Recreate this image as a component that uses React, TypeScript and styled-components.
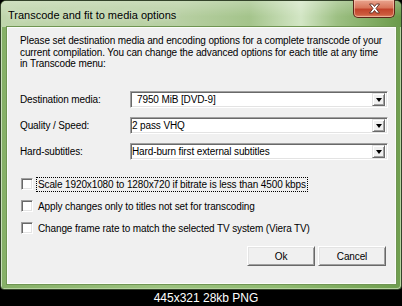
import React from "react";
import styled, { createGlobalStyle } from "styled-components";

const GlobalStyle = createGlobalStyle`
  html, body { margin: 0; padding: 0; background: #000; }
  body { font-family: "Liberation Sans", Arial, sans-serif; }
  * { box-sizing: border-box; }
`;

const Page = styled.div`
  width: 402px;
  height: 306px;
  display: flex;
  flex-direction: column;
  background: #000;
  overflow: hidden;
`;

const Window = styled.div`
  height: 290px;
  display: flex;
  flex-direction: column;
  border: 1px solid #33432a;
  border-radius: 6px 6px 4px 4px;
  background: linear-gradient(to right, #86b067 0%, #9cc27f 40%, #8fba70 70%, #6f9e4e 100%);
  box-shadow: inset 1px 1px 0 #c9dfb9, inset -1px -1px 0 #b6d39f;
`;

const TitleBar = styled.div`
  height: 26px;
  display: flex;
  align-items: flex-start;
  border-radius: 5px 5px 0 0;
  background:
    linear-gradient(to bottom, rgba(255,255,255,0.25), rgba(255,255,255,0) 60%),
    linear-gradient(to right, #c0d6ac 0%, #b7cfa2 45%, #a4c48b 62%, #d3e6c5 75%, #9dc083 84%, #6a9a49 100%);
`;

const Title = styled.span`
  margin: 8px 0 0 7px;
  font-size: 11px;
  line-height: 13px;
  color: #000;
  text-shadow: 0 0 6px rgba(255,255,255,0.8);
`;

const CloseButton = styled.div`
  margin: -1px 6px 0 auto;
  width: 42px;
  height: 18px;
  display: flex;
  align-items: center;
  justify-content: center;
  border: 1px solid #5c2418;
  border-top: none;
  border-radius: 0 0 5px 5px;
  background: linear-gradient(to bottom, #e9a48f 0%, #d9775c 45%, #c2432b 55%, #cc5a3d 85%, #e0896b 100%);
  box-shadow: inset 0 0 0 1px rgba(255,220,200,0.5);
`;

const Panel = styled.div`
  flex: 1;
  margin: 0 5px 5px 6px;
  background: #f0f0f0;
  border: 1px solid #fbfdf9;
  box-shadow: 0 0 0 1px #6f9552;
  padding: 7px 7px 0 12px;
  display: flex;
  flex-direction: column;
  color: #000;
  font-size: 10px;
  letter-spacing: -0.12px;
`;

const Intro = styled.p`
  margin: 0;
  line-height: 11.7px;
  font-size: 10px;
  white-space: nowrap;
`;

const Form = styled.div`
  margin-top: 21px;
  display: grid;
  grid-template-columns: 110px 258px;
  row-gap: 9px;
  align-items: center;
`;

const Label = styled.span`
  font-size: 10px;
`;

const Combo = styled.div<{ $indent?: number }>`
  height: 17px;
  display: flex;
  align-items: center;
  background: #fff;
  border-top: 1px solid #a0a0a0;
  border-left: 1px solid #a0a0a0;
  border-right: 1px solid #fff;
  border-bottom: 1px solid #fff;
  box-shadow: inset 1px 1px 0 #696969, inset -1px -1px 0 #e3e3e3;
  padding-left: ${(p) => p.$indent ?? 2}px;
  padding-right: 2px;
`;

const ComboText = styled.span`
  flex: 1;
  font-size: 10px;
`;

const DropButton = styled.div`
  width: 13px;
  height: 13px;
  background: #f0f0f0;
  border-top: 1px solid #e3e3e3;
  border-left: 1px solid #e3e3e3;
  border-right: 1px solid #696969;
  border-bottom: 1px solid #696969;
  box-shadow: inset 1px 1px 0 #fff, inset -1px -1px 0 #a0a0a0;
  display: flex;
  align-items: center;
  justify-content: center;
`;

const Arrow = styled.span`
  width: 0;
  height: 0;
  border-left: 3.5px solid transparent;
  border-right: 3.5px solid transparent;
  border-top: 4px solid #000;
  margin-top: 1px;
`;

const Checks = styled.div`
  margin-top: 16px;
  display: flex;
  flex-direction: column;
  gap: 6px;
`;

const CheckRow = styled.div`
  height: 16px;
  display: flex;
  align-items: center;
  padding-left: 1px;
`;

const Box = styled.span`
  width: 12px;
  height: 12px;
  background: #fff;
  border-top: 1px solid #a0a0a0;
  border-left: 1px solid #a0a0a0;
  border-right: 1px solid #fff;
  border-bottom: 1px solid #fff;
  box-shadow: inset 1px 1px 0 #696969, inset -1px -1px 0 #e3e3e3;
  margin-right: 3px;
`;

const CheckLabel = styled.span<{ $focus?: boolean }>`
  font-size: 10px;
  line-height: 13px;
  padding: 0 1px;
  border: 1px dotted ${(p) => (p.$focus ? "#000" : "transparent")};
`;

const Buttons = styled.div`
  margin-top: 10px;
  display: flex;
  justify-content: flex-end;
  gap: 3px;
  padding-right: 2px;
`;

const Button = styled.div`
  width: 68px;
  height: 20px;
  display: flex;
  align-items: center;
  justify-content: center;
  font-size: 10px;
  background: #f0f0f0;
  border-top: 1px solid #fff;
  border-left: 1px solid #fff;
  border-right: 1px solid #696969;
  border-bottom: 1px solid #696969;
  box-shadow: inset 1px 1px 0 #e3e3e3, inset -1px -1px 0 #a0a0a0;
`;

const Footer = styled.div`
  height: 16px;
  display: flex;
  align-items: center;
  justify-content: center;
  padding-left: 10px;
  color: #fff;
  font-size: 12px;
`;

const fields = [
  { label: "Destination media:", value: "7950 MiB [DVD-9]", indent: 6 },
  { label: "Quality / Speed:", value: "2 pass VHQ", indent: 1 },
  { label: "Hard-subtitles:", value: "Hard-burn first external subtitles", indent: 1 },
];

const checks = [
  { text: "Scale 1920x1080 to 1280x720 if bitrate is less than 4500 kbps", focus: true },
  { text: "Apply changes only to titles not set for transcoding" },
  { text: "Change frame rate to match the selected TV system (Viera TV)" },
];

export default function App() {
  return (
    <Page>
      <GlobalStyle />
      <Window>
        <TitleBar>
          <Title>Transcode and fit to media options</Title>
          <CloseButton>
            <svg width="13" height="11" viewBox="0 0 13 11">
              <path
                d="M1.5 1 L4.5 1 L6.5 3.5 L8.5 1 L11.5 1 L8 5.5 L11.5 10 L8.5 10 L6.5 7.5 L4.5 10 L1.5 10 L5 5.5 Z"
                fill="#fff"
                stroke="#5a2a20"
                strokeWidth="0.9"
                strokeLinejoin="round"
              />
            </svg>
          </CloseButton>
        </TitleBar>
        <Panel>
          <Intro>
            Please set destination media and encoding options for a complete transcode of your
            <br />
            current compilation. You can change the advanced options for each title at any time
            <br />
            in Transcode menu:
          </Intro>
          <Form>
            {fields.map((f) => (
              <React.Fragment key={f.label}>
                <Label>{f.label}</Label>
                <Combo $indent={f.indent}>
                  <ComboText>{f.value}</ComboText>
                  <DropButton>
                    <Arrow />
                  </DropButton>
                </Combo>
              </React.Fragment>
            ))}
          </Form>
          <Checks>
            {checks.map((c) => (
              <CheckRow key={c.text}>
                <Box />
                <CheckLabel $focus={c.focus}>{c.text}</CheckLabel>
              </CheckRow>
            ))}
          </Checks>
          <Buttons>
            <Button>Ok</Button>
            <Button>Cancel</Button>
          </Buttons>
        </Panel>
      </Window>
      <Footer>445x321 28kb PNG</Footer>
    </Page>
  );
}
